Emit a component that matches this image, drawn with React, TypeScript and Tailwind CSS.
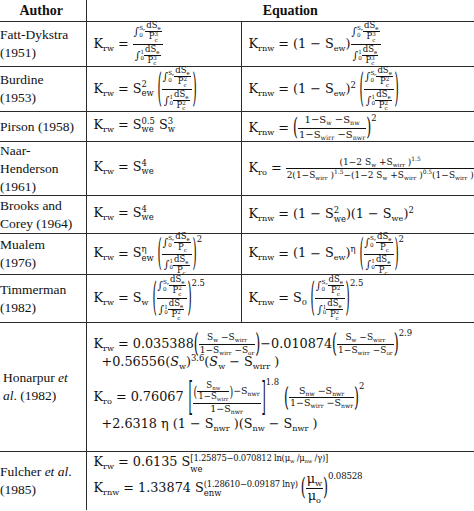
import type { ReactNode } from "react"

// small math helpers
function Sb({ children }: { children: ReactNode }) {
  return <span className="text-[0.64em] align-[-0.34em]">{children}</span>
}

function Sp({ children }: { children: ReactNode }) {
  return <span className="text-[0.66em] align-[0.62em]">{children}</span>
}

function SS({ sup, sub }: { sup?: ReactNode; sub: ReactNode }) {
  if (!sup) return <Sb>{sub}</Sb>
  return (
    <span className="inline-flex flex-col items-start text-[0.66em] leading-[1.05] align-[0.6em]">
      <span>{sup}</span>
      <span>{sub}</span>
    </span>
  )
}

function Fr({ num, den, className = "" }: { num: ReactNode; den: ReactNode; className?: string }) {
  return (
    <span className={"inline-flex flex-col items-center align-middle leading-[1.15] " + className}>
      <span className="px-[1px]">{num}</span>
      <span className="self-stretch border-t border-[#111] px-[1px] text-center">{den}</span>
    </span>
  )
}

function Big({ c, k }: { c: string; k: string }) {
  return <span className={"inline-block align-middle leading-none " + k}>{c}</span>
}

function Eq() {
  return <span className="mx-[4px]">=</span>
}

function Mi() {
  return <span className="mx-[4px]">−</span>
}

// fixed-height cell body; content overflows evenly
function Box({ h, children, className = "" }: { h: string; children: ReactNode; className?: string }) {
  return (
    <div className={"flex items-center " + h + " " + className}>
      <span>{children}</span>
    </div>
  )
}

function IntF({ up, p }: { up: ReactNode; p?: string }) {
  return (
    <span className="inline-flex items-center">
      <span className="text-[1.25em] leading-none italic">∫</span>
      <SS sup={up} sub="0" />
      <Fr
        num={
          <>
            dS<Sb>e</Sb>
          </>
        }
        den={
          <>
            P<SS sup={p} sub="c" />
          </>
        }
      />
    </span>
  )
}

function BigFrac({ p }: { p?: string }) {
  return (
    <span className="text-[8.5px] inline-block align-middle leading-[1.15]">
      <Fr
        num={
          <IntF
            up={
              <>
                S<Sb>e</Sb>
              </>
            }
            p={p}
          />
        }
        den={<IntF up="1" p={p} />}
      />
    </span>
  )
}

function SmallF({ num, den, size = "text-[9.5px]" }: { num: ReactNode; den: ReactNode; size?: string }) {
  return (
    <span className={"inline-block align-middle leading-[1.15] " + size}>
      <Fr num={num} den={den} />
    </span>
  )
}

const line = "border-[#2b2b2b]"
const author = "font-['Liberation_Serif',serif] text-[13.5px] leading-[18px] border-r border-b p-0 pl-[3px] pr-[2px] align-middle text-left " + line
const eqL = "font-['DejaVu_Serif',serif] text-[12.8px] leading-[15px] border-r border-b p-0 pl-[7px] align-middle whitespace-nowrap " + line
const eqR = "font-['DejaVu_Serif',serif] text-[12.8px] leading-[15px] border-b p-0 pl-[7px] align-middle whitespace-nowrap " + line

const Swirr = (
  <>
    S<Sb>wirr</Sb>
  </>
)

export default function App() {
  return (
    <div className="w-[474px] h-[511px] overflow-hidden bg-white text-[#111]">
      <table className="-ml-[3px] w-[497px] table-fixed border-collapse">
        <colgroup>
          <col className="w-[89px]" />
          <col className="w-[155px]" />
          <col className="w-[253px]" />
        </colgroup>
        <tbody>
          <tr>
            <th className={"p-0 border-r border-b font-['Liberation_Serif',serif] text-[14px] leading-[16px] font-bold text-center " + line}>
              <div className="h-[21px] flex items-center justify-center">Author</div>
            </th>
            <th colSpan={2} className={"p-0 border-b font-['Liberation_Serif',serif] text-[14px] leading-[16px] font-bold text-center " + line}>
              <div className="h-[21px] flex items-center justify-center">Equation</div>
            </th>
          </tr>

          <tr>
            <td className={author}>
              <Box h="h-[44px]">
                Fatt-Dykstra
                <br />
                (1951)
              </Box>
            </td>
            <td className={eqL}>
              <Box h="h-[44px]">
                K<Sb>rw</Sb>
                <Eq />
                <BigFrac p="3" />
              </Box>
            </td>
            <td className={eqR}>
              <Box h="h-[44px]">
                K<Sb>rnw</Sb>
                <Eq />
                (1<Mi />S<Sb>ew</Sb>)
                <BigFrac p="3" />
              </Box>
            </td>
          </tr>

          <tr>
            <td className={author}>
              <Box h="h-[44px]">
                Burdine
                <br />
                (1953)
              </Box>
            </td>
            <td className={eqL}>
              <Box h="h-[44px]">
                K<Sb>rw</Sb>
                <Eq />S<SS sup="2" sub="ew" />
                <span className="ml-[3px]" />
                <Big c="(" k="scale-y-[3.1] scale-x-[0.85]" />
                <BigFrac p="2" />
                <Big c=")" k="scale-y-[3.1] scale-x-[0.85]" />
              </Box>
            </td>
            <td className={eqR}>
              <Box h="h-[44px]">
                K<Sb>rnw</Sb>
                <Eq />
                (1<Mi />S<Sb>ew</Sb>)<Sp>2</Sp>
                <span className="ml-[3px]" />
                <Big c="(" k="scale-y-[3.1] scale-x-[0.85]" />
                <BigFrac p="2" />
                <Big c=")" k="scale-y-[3.1] scale-x-[0.85]" />
              </Box>
            </td>
          </tr>

          <tr>
            <td className={author}>
              <Box h="h-[29px]">Pirson (1958)</Box>
            </td>
            <td className={eqL}>
              <Box h="h-[29px]">
                K<Sb>rw</Sb>
                <Eq />S<SS sup="0.5" sub="we" />
                <span className="ml-[4px]">S</span>
                <SS sup="3" sub="w" />
              </Box>
            </td>
            <td className={eqR}>
              <Box h="h-[29px]">
                K<Sb>rnw</Sb>
                <Eq />
                <Big c="(" k="scale-y-[1.85]" />
                <SmallF
                  size="text-[10px]"
                  num={
                    <>
                      1−S<Sb>w</Sb> −S<Sb>nw</Sb>
                    </>
                  }
                  den={
                    <>
                      1−S<Sb>wirr</Sb> −S<Sb>nwr</Sb>
                    </>
                  }
                />
                <Big c=")" k="scale-y-[1.85]" />
                <span className="text-[0.66em] align-[1.3em]">2</span>
              </Box>
            </td>
          </tr>

          <tr>
            <td className={author}>
              <Box h="h-[53px]">
                Naar-
                <br />
                Henderson
                <br />
                (1961)
              </Box>
            </td>
            <td className={eqL}>
              <Box h="h-[53px]">
                K<Sb>rw</Sb>
                <Eq />S<SS sup="4" sub="we" />
              </Box>
            </td>
            <td className={eqR}>
              <Box h="h-[53px]">
                K<Sb>ro</Sb>
                <Eq />
                <SmallF
                  size="text-[9px]"
                  num={
                    <>
                      (1−2 S<Sb>w</Sb> +{Swirr} )<Sp>1.5</Sp>
                    </>
                  }
                  den={
                    <>
                      2(1−{Swirr} )<Sp>1.5</Sp>−(1−2 S<Sb>w</Sb> +{Swirr} )<Sp>0.5</Sp>(1−{Swirr} )
                    </>
                  }
                />
              </Box>
            </td>
          </tr>

          <tr>
            <td className={author}>
              <Box h="h-[37px]">
                Brooks and
                <br />
                Corey (1964)
              </Box>
            </td>
            <td className={eqL}>
              <Box h="h-[37px]">
                K<Sb>rw</Sb>
                <Eq />S<SS sup="4" sub="we" />
              </Box>
            </td>
            <td className={eqR}>
              <Box h="h-[37px]">
                K<Sb>rnw</Sb>
                <Eq />
                (1<Mi />S<SS sup="2" sub="we" />)(1<Mi />S<Sb>we</Sb>)<Sp>2</Sp>
              </Box>
            </td>
          </tr>

          <tr>
            <td className={author}>
              <Box h="h-[40px]">
                Mualem
                <br />
                (1976)
              </Box>
            </td>
            <td className={eqL}>
              <Box h="h-[40px]">
                K<Sb>rw</Sb>
                <Eq />S<SS sup="η" sub="ew" />
                <span className="ml-[3px]" />
                <Big c="(" k="scale-y-[2.9] scale-x-[0.85]" />
                <BigFrac />
                <Big c=")" k="scale-y-[2.9] scale-x-[0.85]" />
                <span className="text-[0.66em] align-[1.75em]">2</span>
              </Box>
            </td>
            <td className={eqR}>
              <Box h="h-[40px]">
                K<Sb>rnw</Sb>
                <Eq />
                (1<Mi />S<Sb>ew</Sb>)<Sp>η</Sp>
                <span className="ml-[3px]" />
                <Big c="(" k="scale-y-[2.9] scale-x-[0.85]" />
                <BigFrac />
                <Big c=")" k="scale-y-[2.9] scale-x-[0.85]" />
                <span className="text-[0.66em] align-[1.75em]">2</span>
              </Box>
            </td>
          </tr>

          <tr>
            <td className={author}>
              <Box h="h-[47px]">
                Timmerman
                <br />
                (1982)
              </Box>
            </td>
            <td className={eqL}>
              <Box h="h-[47px]">
                K<Sb>rw</Sb>
                <Eq />S<Sb>w</Sb>
                <span className="ml-[3px]" />
                <Big c="(" k="scale-y-[3.1] scale-x-[0.85]" />
                <BigFrac p="2" />
                <Big c=")" k="scale-y-[3.1] scale-x-[0.85]" />
                <span className="text-[0.66em] align-[1.9em]">2.5</span>
              </Box>
            </td>
            <td className={eqR}>
              <Box h="h-[47px]">
                K<Sb>rnw</Sb>
                <Eq />S<Sb>0</Sb>
                <span className="ml-[3px]" />
                <Big c="(" k="scale-y-[3.1] scale-x-[0.85]" />
                <BigFrac p="2" />
                <Big c=")" k="scale-y-[3.1] scale-x-[0.85]" />
                <span className="text-[0.66em] align-[1.9em]">2.5</span>
              </Box>
            </td>
          </tr>

          <tr>
            <td className={author + " pl-[6px]"}>
              <Box h="h-[128px]">
                Honarpur <i>et</i>
                <br />
                <i>al</i>. (1982)
              </Box>
            </td>
            <td colSpan={2} className={eqR + " align-top"}>
              <div className="flex flex-col h-[128px] pt-[5px]">
                <Box h="h-[26px]">
                  K<Sb>rw</Sb>
                  <Eq />
                  0.035388
                  <Big c="(" k="scale-y-[2]" />
                  <SmallF
                    size="text-[9px]"
                    num={
                      <>
                        S<Sb>w</Sb> −{Swirr}
                      </>
                    }
                    den={
                      <>
                        1−{Swirr} −S<Sb>or</Sb>
                      </>
                    }
                  />
                  <Big c=")" k="scale-y-[2]" />
                  −0.010874
                  <Big c="(" k="scale-y-[2]" />
                  <SmallF
                    size="text-[9px]"
                    num={
                      <>
                        S<Sb>w</Sb> −{Swirr}
                      </>
                    }
                    den={
                      <>
                        1−{Swirr} −S<Sb>or</Sb>
                      </>
                    }
                  />
                  <Big c=")" k="scale-y-[2]" />
                  <span className="text-[0.66em] align-[1.45em]">2.9</span>
                </Box>
                <Box h="h-[16px]" className="pl-[8px]">
                  +0.56556(<i>S</i>
                  <Sb>w</Sb>)<Sp>3.6</Sp>(<i>S</i>
                  <Sb>w</Sb>
                  <Mi />
                  {Swirr} )
                </Box>
                <Box h="h-[50px]">
                  K<Sb>ro</Sb>
                  <Eq />
                  0.76067
                  <Big c="[" k="ml-[4px] scale-y-[3] scale-x-[0.85]" />
                  <SmallF
                    num={
                      <>
                        <Big c="(" k="scale-y-[1.5]" />
                        <Fr
                          className="text-[0.9em]"
                          num={
                            <>
                              S<Sb>nw</Sb>
                            </>
                          }
                          den={<>1−{Swirr}</>}
                        />
                        <Big c=")" k="scale-y-[1.5]" />
                        −S<Sb>nwr</Sb>
                      </>
                    }
                    den={
                      <>
                        1−S<Sb>nwr</Sb>
                      </>
                    }
                  />
                  <Big c="]" k="scale-y-[3] scale-x-[0.85]" />
                  <span className="text-[0.66em] align-[1.9em]">1.8</span>
                  <span className="ml-[5px]" />
                  <Big c="(" k="scale-y-[2]" />
                  <SmallF
                    num={
                      <>
                        S<Sb>nw</Sb> −S<Sb>nwr</Sb>
                      </>
                    }
                    den={
                      <>
                        1−{Swirr} −S<Sb>nwr</Sb>
                      </>
                    }
                  />
                  <Big c=")" k="scale-y-[2]" />
                  <span className="text-[0.66em] align-[1.45em]">2</span>
                </Box>
                <Box h="h-[12px]" className="pl-[8px]">
                  +2.6318 η (1<Mi />S<Sb>nwr</Sb> )(S<Sb>nw</Sb>
                  <Mi />S<Sb>nwr</Sb> )
                </Box>
              </div>
            </td>
          </tr>

          <tr>
            <td className={author + " border-b-0"}>
              <Box h="h-[58px]">
                Fulcher <i>et al</i>.
                <br />
                (1985)
              </Box>
            </td>
            <td colSpan={2} className={eqR + " align-top border-b-0"}>
              <div className="flex flex-col h-[58px] pt-[3px]">
                <Box h="h-[18px]">
                  K<Sb>rw</Sb>
                  <Eq />
                  0.6135 S
                  <SS
                    sup={
                      <span className="tracking-[-0.03em]">
                        [1.25875−0.070812 ln(μ<Sb>w</Sb> /μ<Sb>nw</Sb> /γ)]
                      </span>
                    }
                    sub="we"
                  />
                </Box>
                <Box h="h-[28px]">
                  K<Sb>rnw</Sb>
                  <Eq />
                  1.33874 S
                  <SS sup={<span className="tracking-[-0.03em]">(1.28610−0.09187 lnγ)</span>} sub="enw" />
                  <span className="ml-[3px]" />
                  <Big c="(" k="scale-y-[1.85]" />
                  <Fr
                    num={
                      <>
                        μ<Sb>w</Sb>
                      </>
                    }
                    den={
                      <>
                        μ<Sb>o</Sb>
                      </>
                    }
                  />
                  <Big c=")" k="scale-y-[1.85]" />
                  <span className="text-[0.68em] align-[1.5em] tracking-[-0.03em]">0.08528</span>
                </Box>
              </div>
            </td>
          </tr>
        </tbody>
      </table>
    </div>
  )
}
